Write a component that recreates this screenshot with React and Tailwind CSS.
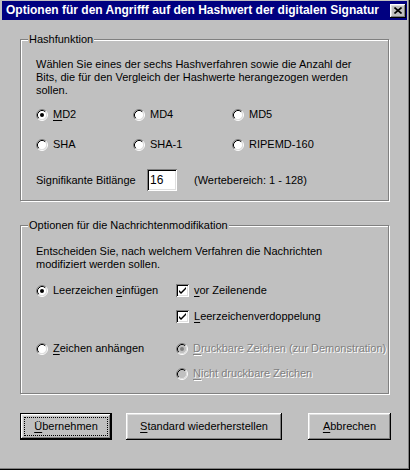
import { useState } from "react";

const font = { fontFamily: '"Liberation Sans", Arial, sans-serif' };

const Radio = ({ checked, disabled }) => (
  <svg width="12" height="12" viewBox="0 0 12 12" className="shrink-0">
    <circle cx="6" cy="6" r="4.5" fill={disabled ? "#c0c0c0" : "#fff"} />
    <path d="M9.89 2.11A5.5 5.5 0 0 0 2.11 9.89" fill="none" stroke="#808080" />
    <path d="M2.11 9.89A5.5 5.5 0 0 0 9.89 2.11" fill="none" stroke="#fff" />
    <path d="M9.18 2.82A4.5 4.5 0 0 0 2.82 9.18" fill="none" stroke="#000" />
    <path d="M2.82 9.18A4.5 4.5 0 0 0 9.18 2.82" fill="none" stroke="#dfdfdf" />
    {checked && <circle cx="6" cy="6" r="2" fill={disabled ? "#808080" : "#000"} />}
  </svg>
);

const Check = ({ checked }) => (
  <span className="flex h-[13px] w-[13px] shrink-0 bg-white shadow-[inset_1px_1px_0_#808080,inset_-1px_-1px_0_#fff,inset_2px_2px_0_#000,inset_-2px_-2px_0_#dfdfdf]">
    {checked && (
      <svg width="13" height="13" viewBox="0 0 13 13">
        <path d="M3 6l2 2 5-5v2l-5 5-2-2z" fill="#000" />
      </svg>
    )}
  </span>
);

const Key = ({ children }) => <span className="underline underline-offset-2">{children}</span>;

const Option = ({ type = "radio", checked, disabled, children, className = "" }) => (
  <label className={`flex h-[13px] items-center gap-[5px] ${className}`}>
    {type === "radio" ? <Radio checked={checked} disabled={disabled} /> : <Check checked={checked} />}
    <span className={disabled ? "text-[#808080] [text-shadow:1px_1px_0_#fff]" : "text-black"}>{children}</span>
  </label>
);

const Group = ({ title, children }) => (
  <fieldset className="w-[369px] border border-[#808080] shadow-[inset_1px_1px_0_#fff,1px_1px_0_#fff]">
    <legend className="ml-[7px] bg-[#c0c0c0] px-[1px] leading-[13px]">{title}</legend>
    {children}
  </fieldset>
);

const raised = "shadow-[inset_-1px_-1px_0_#000,inset_1px_1px_0_#fff,inset_-2px_-2px_0_#808080,inset_2px_2px_0_#dfdfdf]";

export default function App() {
  const [hash, setHash] = useState("MD2");
  const [bits, setBits] = useState("16");

  return (
    <div className="min-h-[471px] w-[411px] bg-white text-[11px] leading-[13px] text-black" style={font}>
      <div className="flex h-[470px] w-[410px] flex-col bg-[#c0c0c0] pl-[2px] pr-[3px] pt-[1px] shadow-[inset_-1px_-1px_0_#000,inset_-2px_-2px_0_#808080]">
        <div className="flex h-[19px] items-center justify-between bg-[#000080] pl-[4px] pr-[1px]">
          <span className="text-[12px] font-bold text-white">Optionen für den Angrifff auf den Hashwert der digitalen Signatur</span>
          <button className={`flex h-[14px] w-[16px] items-center justify-center bg-[#c0c0c0] ${raised}`}>
            <svg width="8" height="7" viewBox="0 0 8 7">
              <path d="M0.5 0.5l7 6M7.5 0.5l-7 6" stroke="#000" strokeWidth="1.6" />
            </svg>
          </button>
        </div>

        <div className="ml-[18px] mt-[13px] flex flex-col">
          <Group title="Hashfunktion">
            <div className="pb-[9px] pl-[15px] pt-[12px]">
              <p className="w-[320px]">
                Wählen Sie eines der sechs Hashverfahren sowie die Anzahl der Bits, die für den Vergleich der Hashwerte herangezogen werden sollen.
              </p>
              <div className="mt-[11px] grid grid-cols-[97px_99px_1fr] gap-y-[17px]">
                {["MD2", "MD4", "MD5", "SHA", "SHA-1", "RIPEMD-160"].map((name) => (
                  <div key={name} onClick={() => setHash(name)}>
                    <Option checked={hash === name}>
                      {name === "MD2" ? (
                        <>
                          <Key>M</Key>D2
                        </>
                      ) : (
                        name
                      )}
                    </Option>
                  </div>
                ))}
              </div>
              <div className="mt-[18px] flex items-center">
                <span className="w-[111px]">Signifikante Bitlänge</span>
                <input
                  value={bits}
                  onChange={(e) => setBits(e.target.value)}
                  className="h-[22px] w-[30px] bg-white px-[3px] text-[12px] outline-none shadow-[inset_1px_1px_0_#808080,inset_-1px_-1px_0_#fff,inset_2px_2px_0_#000,inset_-2px_-2px_0_#dfdfdf]"
                />
                <span className="ml-[17px]">(Wertebereich: 1 - 128)</span>
              </div>
            </div>
          </Group>

          <div className="mt-[18px]">
            <Group title="Optionen für die Nachrichtenmodifikation">
              <div className="pb-[13px] pl-[15px] pt-[13px]">
                <p className="w-[300px]">Entscheiden Sie, nach welchem Verfahren die Nachrichten modifiziert werden sollen.</p>
                <div className="mt-[13px] grid grid-cols-[140px_1fr]">
                  <Option checked>
                    Leerzeichen <Key>e</Key>infügen
                  </Option>
                  <Option type="check" checked>
                    <Key>v</Key>or Zeilenende
                  </Option>
                  <div />
                  <Option type="check" checked className="mt-[13px]">
                    <Key>L</Key>eerzeichenverdoppelung
                  </Option>
                  <Option className="mt-[19px]">
                    <Key>Z</Key>eichen anhängen
                  </Option>
                  <Option checked disabled className="mt-[19px]">
                    <Key>D</Key>ruckbare Zeichen (zur Demonstration)
                  </Option>
                  <div />
                  <Option disabled className="mt-[12px]">
                    <Key>N</Key>icht druckbare Zeichen
                  </Option>
                </div>
              </div>
            </Group>
          </div>

          <div className="mt-[19px] flex h-[27px] w-[371px] items-stretch">
            <button className="flex w-[92px] border border-black bg-[#c0c0c0] p-0">
              <span className={`flex flex-1 items-center justify-center p-[3px] ${raised}`}>
                <span className="flex h-full w-full items-center justify-center border border-dotted border-black">
                  <Key>Ü</Key>bernehmen
                </span>
              </span>
            </button>
            <button className={`ml-[14px] w-[156px] bg-[#c0c0c0] ${raised}`}>
              <Key>S</Key>tandard wiederherstellen
            </button>
            <button className={`ml-auto w-[83px] bg-[#c0c0c0] ${raised}`}>
              <Key>A</Key>bbrechen
            </button>
          </div>
        </div>
      </div>
    </div>
  );
}
